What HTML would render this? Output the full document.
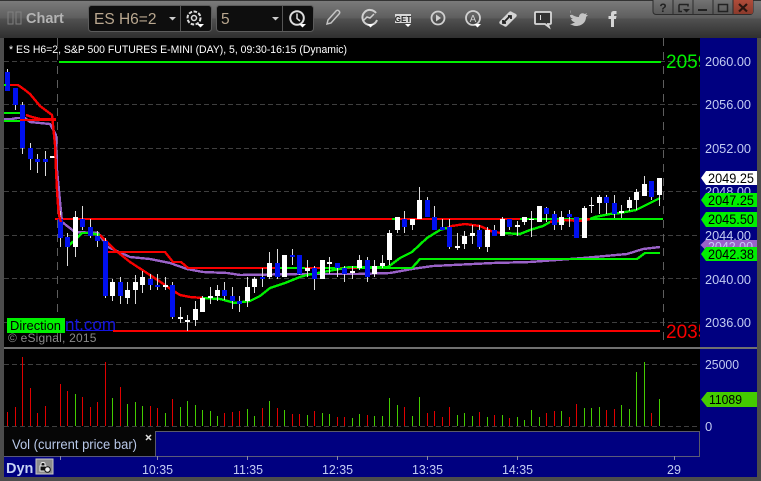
<!DOCTYPE html>
<html><head><meta charset="utf-8"><style>
html,body{margin:0;padding:0;background:#4a4a4a;width:761px;height:481px;overflow:hidden}
svg{display:block}
text{font-family:"Liberation Sans",sans-serif}
</style></head><body>
<svg width="761" height="481" viewBox="0 0 761 481" xmlns="http://www.w3.org/2000/svg">
<defs>
<linearGradient id="tb" x1="0" y1="0" x2="0" y2="1">
<stop offset="0" stop-color="#7c7c7c"/><stop offset=".47" stop-color="#5e5e5e"/><stop offset=".5" stop-color="#505050"/><stop offset="1" stop-color="#2f2f2f"/>
</linearGradient>
<linearGradient id="btn" x1="0" y1="0" x2="0" y2="1"><stop offset="0" stop-color="#7a7a7a"/><stop offset="1" stop-color="#585858"/></linearGradient>
<linearGradient id="cls" x1="0" y1="0" x2="0" y2="1"><stop offset="0" stop-color="#b8503c"/><stop offset="1" stop-color="#8a3a2c"/></linearGradient>
<clipPath id="lab"><rect x="664" y="40" width="36" height="310"/></clipPath>
<clipPath id="blu"><rect x="66" y="310" width="60" height="25"/></clipPath>
</defs>
<rect width="761" height="481" fill="#4c4c4c"/>
<rect width="761" height="38" fill="url(#tb)"/>
<rect x="0" y="0" width="761" height="1" fill="#333"/>
<rect x="4" y="38" width="696" height="393" fill="#000"/>
<rect x="700" y="38" width="57" height="439" fill="#000080"/>
<rect x="4" y="431" width="696" height="46" fill="#000080"/>
<rect x="4" y="427" width="151" height="30" fill="#060606"/>
<rect x="155" y="431" width="545" height="1" fill="#5a5a6a"/>
<rect x="155" y="431" width="1" height="26" fill="#5a5a6a"/>
<rect x="699" y="431" width="1" height="26" fill="#5a5a6a"/>
<rect x="4" y="456" width="696" height="1" fill="#5a5a7a"/>
<rect x="4" y="347" width="753" height="2" fill="#707070"/>

<!-- toolbar left -->
<rect x="8" y="12" width="5" height="12" fill="none" stroke="#808080"/>
<rect x="16" y="12" width="5" height="12" fill="none" stroke="#808080"/>
<text x="26" y="23" font-size="14.500" font-weight="bold" fill="#b4b4b4">Chart</text>
<rect x="88.500" y="5.500" width="123" height="26" rx="3" fill="#0e0e0e" stroke="#5c5c5c"/>
<rect x="180" y="6" width="1" height="25" fill="#555"/>
<text x="94" y="24" font-size="15.500" fill="#b9a78f">ES H6=2</text>
<path d="M169 17h7l-3.500 3.500z" fill="#ccc"/>
<circle cx="194" cy="18" r="6.500" fill="none" stroke="#ddd" stroke-width="2" stroke-dasharray="3.500 1.500"/>
<circle cx="194" cy="18" r="2.500" fill="none" stroke="#ddd" stroke-width="1.500"/>
<path d="M197 24h7l-3.500 3.500z" fill="#fff"/>
<rect x="216.500" y="5.500" width="97" height="26" rx="3" fill="#0e0e0e" stroke="#5c5c5c"/>
<rect x="282" y="6" width="1" height="25" fill="#555"/>
<text x="221" y="24" font-size="15.500" fill="#b9a78f">5</text>
<path d="M272 17h7l-3.500 3.500z" fill="#ccc"/>
<circle cx="297" cy="18" r="6.800" fill="none" stroke="#ddd" stroke-width="2"/>
<path d="M297 13.500V18.500L300 21" fill="none" stroke="#ddd" stroke-width="1.500"/>
<path d="M299 24h7l-3.500 3.500z" fill="#fff"/>

<!-- toolbar icons -->
<path d="M327 24l1-4 8-9c1-1 2-1 3 0s1 2 0 3l-8 9z" fill="none" stroke="#c4c4c4" stroke-width="1.500"/>
<path d="M376 13a7.500 7.500 0 1 0 1 7" fill="none" stroke="#d0d0d0" stroke-width="2"/>
<path d="M363 21l4-4 3 1 4-4" fill="none" stroke="#d0d0d0" stroke-width="1.500"/>
<path d="M367 24h7l-3.500 3.500z" fill="#fff"/>
<rect x="395" y="14" width="16" height="9" fill="#d8d8d8"/>
<text x="403" y="22" font-size="8" font-weight="bold" fill="#222" text-anchor="middle">GET</text>
<path d="M405 24h6l-3 3z" fill="#fff"/>
<circle cx="438" cy="18" r="6.500" fill="none" stroke="#d0d0d0" stroke-width="1.800"/>
<path d="M436 14.500l5 3.500-5 3.500z" fill="#d0d0d0"/>
<circle cx="473" cy="18" r="7" fill="none" stroke="#d0d0d0" stroke-width="1.800"/>
<text x="473" y="22" font-size="10" fill="#d0d0d0" text-anchor="middle">A</text>
<path d="M474 24h7l-3.500 3.500z" fill="#fff"/>
<path d="M500 21l9-9c1-1 2-1 3 0l4 2c1 1 1 2 0 3l-9 9c-1 1-2 1-3 0l-4-2c-1-1-1-2 0-3z" fill="#d4d4d4"/>
<path d="M504 22l6-6M508 16h3v3M503 20v3h3" fill="none" stroke="#222" stroke-width="1.800"/>
<path d="M536 12h14c1 0 1 1 1 1v10c0 1-1 1-1 1h-2l1 3-4-3h-9c-1 0-1-1-1-1V13c0-1 1-1 1-1z" fill="#333" stroke="#d8d8d8" stroke-width="1.800"/>
<rect x="540" y="15" width="1" height="5" fill="#ddd"/>
<path d="M571 14c3 2 5 3 8 3 0-3 3-5 6-3l2-1-1 2 2 0-2 2c0 6-5 9-10 9-2 0-4-1-6-2 2 0 4-1 5-2-2 0-3-1-4-3h2c-2-1-3-2-3-4h2c-1-1-2-3-1-5z" fill="#c4c4c4"/>
<path d="M611 27V19h-2.500v-3H611v-2c0-2 1-3 3-3h2.500v3H615c-.5 0-1 .5-1 1v1h2.500l-.5 3h-2v8z" fill="#d6d6d6"/>

<!-- window buttons -->
<rect x="653" y="-4" width="100" height="18.500" rx="3" fill="url(#btn)" stroke="#2c2c2c"/>
<rect x="733" y="-3" width="20" height="17" rx="2" fill="url(#cls)"/>
<path d="M673 0v14M693 0v14M713 0v14M733 0v14" stroke="#2c2c2c" stroke-width="1"/>
<text x="663" y="12" font-size="12" font-weight="bold" fill="#222" text-anchor="middle">?</text>
<path d="M679 4.500h9v2M679 4.500v7h3" fill="none" stroke="#222" stroke-width="1.500"/>
<path d="M683 9h7l-3.500 3.500z" fill="#222"/>
<rect x="698" y="9" width="9" height="2" fill="#222"/>
<rect x="718.500" y="4.500" width="9" height="7" fill="none" stroke="#222" stroke-width="1.500"/>
<path d="M739 4l8 7.500M747 4l-8 7.500" stroke="#2a1510" stroke-width="2.200"/>

<!-- grid -->
<g shape-rendering="crispEdges">
<path d="M4 61.500H700M4 104.500H700M4 148.500H700M4 191.500H700M4 235.500H700M4 278.500H700M4 322.500H700" stroke="#3f3f3f" stroke-dasharray="5 3" fill="none"/>
<path d="M4 364.500H700M4 426.500H700" stroke="#3f3f3f" stroke-dasharray="5 3" fill="none"/>
<path d="M57.500 38V346M663.500 38V346" stroke="#5e5e5e" stroke-dasharray="8 6" fill="none"/>

<!-- level lines -->
<rect x="59" y="61" width="602" height="2" fill="#00f000"/>
<rect x="113" y="330" width="547" height="2" fill="#f80000"/>
<rect x="55" y="218" width="608" height="2" fill="#f80000"/>
<rect x="520" y="218" width="143" height="2" fill="#00f000"/>
<rect x="392" y="218" width="6" height="2" fill="#00f000"/>

<g fill="none" stroke-width="2.400" stroke-linejoin="round">
<!-- purple -->
<path d="M4 119H12L17 118H25L30 122 50 124 56 135 57 170 62 222 75 232 98 233 108 247 130 257 150 259 170 263 187 269 203 272 227 273 240 275 300 274 357 274 390 273 412 269 433 266 493 263 530 262 583 258 627 254 643 249 660 247" stroke="#9a62c8"/>
<!-- lower line -->
<path d="M105 252H165L173 262H181L188 268H275" stroke="#f80000"/>
<path d="M275 268H365L412 268 420 259H637L645 253H660" stroke="#00f000"/>
<path d="M305 268H320M340 268H357" stroke="#f80000"/>
<path d="M4 113H20M4 121H20" stroke="#00f000"/>
<!-- ema -->
<path d="M67 247L75 240 82 233 90 233 100 235" stroke="#00f000"/>
<path d="M100 235L105 240 115 250 130 262 150 275 165 285 172 290 180 295 190 297 203 298" stroke="#f80000"/>
<path d="M203 298L220 299 235 303 250 301 260 296 270 288 285 283 300 277 307 275 350 267 388 267 400 258 412 252 427 238 440 230 447 228" stroke="#00f000"/>
<path d="M447 228L452 226 465 224 480 226 493 232 503 233" stroke="#f80000"/>
<path d="M503 233L520 234 530 230 543 226 550 222 565 221" stroke="#00f000"/>
<path d="M550 222L565 220 580 221 590 219" stroke="#f80000"/>
<path d="M590 219L595 217 610 214 620 213 636 210 648 204 660 198" stroke="#00f000"/>
</g>

<!-- wicks -->
<path stroke="#dcdcdc" fill="none" d="M7.500 69V91M15.500 88V110M22.500 102V154M30.500 143V170M37.500 154V173M45.500 151V176M60.500 211V247M67.500 233V266M82.500 206V230M90.500 219V238M97.500 231V247M105.500 238V298M120.500 277V304M150.500 274V290M157.500 274V290M172.500 282V319M224.500 282V300M232.500 287V309M239.500 296V312M262.500 268V287M277.500 249V279M292.500 249V265M299.500 255V275M314.500 266V290M337.500 263V277M344.500 266V282M367.500 257V282M404.500 211V233M427.500 197V217M434.500 206V230M442.500 219V230M449.500 219V249M479.500 225V249M494.500 225V236M509.500 219V230M546.500 207V222M554.500 211V230M569.500 210V227M576.500 217V238M606.500 195V214M614.500 195V218M651.500 181V200M75.500 211V257M112.500 279V301M127.500 282V304M135.500 275V304M142.500 271V293M165.500 277V290M180.500 307V323M187.500 315V331M195.500 301V326M202.500 296V312M210.500 287V304M217.500 285V301M247.500 277V307M254.500 277V293M269.500 252V279M284.500 255V277M307.500 260V277M322.500 260V279M329.500 257V274M352.500 266V279M359.500 255V270M374.500 260V277M382.500 255V268M389.500 230V265M397.500 217V233M412.500 219V230M419.500 187V219M457.500 233V250M464.500 231V249M472.500 225V244M487.500 227V252M502.500 217V236M517.500 221V236M524.500 217V225M531.500 211V237M539.500 206V222M561.500 211V230M584.500 206V238M591.500 197V213M599.500 195V214M621.500 205V218M629.500 197V211M636.500 189V210M644.500 176V196M659.500 178V206"/>
<!-- blue bodies -->
<path stroke="#0010ee" stroke-width="5" fill="none" d="M7.500 72V91M15.500 88V105M22.500 105V148M30.500 148V159M37.500 159V162M45.500 159V162M60.500 219V238M67.500 237V247M82.500 219V227M90.500 227V236M97.500 236V241M105.500 241V296M120.500 282V296M150.500 279V285M157.500 285V287M172.500 285V317M224.500 290V296M232.500 296V301M239.500 301V304M262.500 277V279M277.500 263V277M292.500 255V257M299.500 255V274M314.500 268V279M337.500 263V268M344.500 268V274M367.500 260V277M404.500 219V227M427.500 200V217M434.500 217V230M442.500 227V230M449.500 227V247M479.500 230V247M494.500 230V236M509.500 219V227M546.500 208V214M554.500 214V225M569.500 214V217M576.500 217V238M606.500 197V203M614.500 203V214M651.500 181V197"/>
<!-- white bodies -->
<path stroke="#fff" stroke-width="5" fill="none" d="M52.500 156V158M75.500 217V247M112.500 282V296M127.500 290V298M135.500 282V290M142.500 277V285M165.500 285V287M180.500 317V319M187.500 320V322M195.500 309V320M202.500 298V312M210.500 296V298M217.500 290V296M247.500 287V301M254.500 279V287M269.500 263V277M284.500 255V277M307.500 268V271M322.500 260V279M329.500 262V264M352.500 271V273M359.500 260V268M374.500 266V274M382.500 263V266M389.500 233V260M397.500 217V230M412.500 219V225M419.500 200V219M457.500 246V248M464.500 236V244M472.500 233V236M487.500 230V247M502.500 219V236M517.500 225V227M524.500 217V222M531.500 219V220M539.500 206V222M561.500 217V225M584.500 208V238M591.500 205V206M599.500 197V203M621.500 211V213M629.500 200V208M636.500 192V200M644.500 184V196M659.500 178V195"/>

<!-- left red over candles -->
<path d="M10 85H18L25 90 30 94 40 106 52 115 53 125 55 145 56 170 57 190 58 205 59 215 61 222" fill="none" stroke="#f80000" stroke-width="2.400"/>
<path d="M26 115L32 117 40 119H56M20 120H56" fill="none" stroke="#f80000" stroke-width="2.400"/>
<path d="M4 85H6" stroke="#00f000" stroke-width="2"/>

<!-- volume -->
<path fill="none" stroke="#e00000" d="M7.500 412V426M15.500 407V426M22.500 357V426M30.500 388V426M37.500 413V426M45.500 406V426M60.500 384V426M67.500 391V426M82.500 397V426M90.500 407V426M97.500 402V426M105.500 362V426M120.500 387V426M150.500 406V426M157.500 408V426M172.500 399V426M224.500 413V426M232.500 412V426M239.500 411V426M262.500 408V426M277.500 408V426M292.500 414V426M299.500 414V426M314.500 411V426M337.500 417V426M344.500 417V426M367.500 415V426M404.500 407V426M427.500 413V426M434.500 411V426M442.500 417V426M449.500 407V426M479.500 412V426M494.500 415V426M509.500 418V426M546.500 413V426M554.500 411V426M569.500 417V426M576.500 404V426M606.500 410V426M614.500 409V426M651.500 413V426"/>
<path fill="none" stroke="#44cc00" d="M75.500 394V426M112.500 398V426M127.500 404V426M135.500 402V426M142.500 406V426M165.500 413V426M180.500 407V426M187.500 401V426M195.500 405V426M202.500 410V426M210.500 411V426M217.500 416V426M247.500 409V426M254.500 416V426M269.500 401V426M284.500 410V426M307.500 415V426M322.500 413V426M329.500 414V426M352.500 418V426M359.500 414V426M374.500 416V426M382.500 416V426M389.500 398V426M397.500 405V426M412.500 416V426M419.500 397V426M457.500 415V426M464.500 413V426M472.500 416V426M487.500 417V426M502.500 415V426M517.500 417V426M524.500 420V426M531.500 410V426M539.500 417V426M561.500 411V426M584.500 408V426M591.500 408V426M599.500 407V426M621.500 405V426M629.500 409V426M636.500 372V426M644.500 362V426M659.500 399V426"/>

<!-- ticks -->
<path d="M60.500 456V460M157.500 456V460M247.500 456V460M337.500 456V460M427.500 456V460M517.500 456V460M674.500 456V460" stroke="#8888a8" fill="none"/>
</g>

<!-- chart text -->
<text x="9" y="53" font-size="11" fill="#fff" textLength="338" lengthAdjust="spacingAndGlyphs">* ES H6=2, S&amp;P 500 FUTURES E-MINI (DAY), 5, 09:30-16:15 (Dynamic)</text>
<g clip-path="url(#lab)" font-size="19">
<text x="666" y="68" fill="#00f000">2059</text>
<text x="666" y="338" fill="#f80000">2035</text>
</g>
<g clip-path="url(#blu)">
<text x="65" y="330" font-size="17" fill="#1414e0">nt.com</text>
</g>
<rect x="66" y="330" width="47" height="1" fill="#1414e0"/>
<rect x="7" y="318" width="58" height="15" fill="#00f000"/>
<text x="10" y="330" font-size="13" fill="#000" textLength="51" lengthAdjust="spacingAndGlyphs">Direction</text>
<text x="8" y="342" font-size="12" fill="#8a8a8a" letter-spacing=".2">© eSignal, 2015</text>

<!-- axis labels -->
<g font-size="13" fill="#c2cbf2">
<text x="705" y="66" textLength="46" lengthAdjust="spacingAndGlyphs">2060.00</text>
<text x="705" y="109" textLength="46" lengthAdjust="spacingAndGlyphs">2056.00</text>
<text x="705" y="153" textLength="46" lengthAdjust="spacingAndGlyphs">2052.00</text>
<text x="705" y="196" textLength="46" lengthAdjust="spacingAndGlyphs">2048.00</text>
<text x="705" y="240" textLength="46" lengthAdjust="spacingAndGlyphs">2044.00</text>
<text x="705" y="327" textLength="46" lengthAdjust="spacingAndGlyphs">2036.00</text>
<text x="705" y="284" textLength="46" lengthAdjust="spacingAndGlyphs">2040.00</text>
<text x="705" y="369" textLength="34" lengthAdjust="spacingAndGlyphs">25000</text>
<text x="705" y="431">0</text>
</g>
<!-- tags -->
<path d="M700.500 245l5-5H757v10H705.500z" fill="#9a62c8"/>
<text x="708" y="251" font-size="13" fill="#c2cbf2" textLength="45" lengthAdjust="spacingAndGlyphs">2042.00</text>
<path d="M701 178l5-7h51v14H706z" fill="#fff"/>
<text x="708" y="183" font-size="13.500" fill="#000" textLength="46" lengthAdjust="spacingAndGlyphs">2049.25</text>
<path d="M701 200l5-7h51v14H706z" fill="#00f000"/>
<text x="708" y="205" font-size="13.500" fill="#000" textLength="46" lengthAdjust="spacingAndGlyphs">2047.25</text>
<path d="M701 219.500l5-7.500h51v15H706z" fill="#00f000"/>
<text x="708" y="224" font-size="13.500" fill="#000" textLength="46" lengthAdjust="spacingAndGlyphs">2045.50</text>
<path d="M701 254l5-7h51v14H706z" fill="#00f000"/>
<text x="708" y="259" font-size="13.500" fill="#000" textLength="46" lengthAdjust="spacingAndGlyphs">2042.38</text>
<path d="M701 399.500l6-7.500h50v15H707z" fill="#44cc00"/>
<text x="709" y="404" font-size="13" fill="#000" textLength="33" lengthAdjust="spacingAndGlyphs">11089</text>

<!-- vol label -->
<text x="12" y="449" font-size="13.500" fill="#b8c8e8" textLength="125" lengthAdjust="spacingAndGlyphs">Vol (current price bar)</text>
<path d="M146 435l5 5M151 435l-5 5" stroke="#ddd" stroke-width="1.500"/>

<!-- bottom axis -->
<text x="6" y="473" font-size="14.500" font-weight="bold" fill="#c8d4f4">Dyn</text>
<rect x="36" y="459" width="17" height="15" fill="#8c8c8c" stroke="#c8c8c8"/>
<path d="M40 471v-5h6v5zM41 466v-2c0-2 4-2 4 0v2" fill="#111" stroke="#eee"/>
<circle cx="47.500" cy="469.500" r="2.800" fill="#eee" stroke="#111"/>
<g font-size="13" fill="#c2cbf2">
<text x="142" y="474" textLength="31" lengthAdjust="spacingAndGlyphs">10:35</text>
<text x="233" y="474" textLength="30" lengthAdjust="spacingAndGlyphs">11:35</text>
<text x="322" y="474" textLength="31" lengthAdjust="spacingAndGlyphs">12:35</text>
<text x="412" y="474" textLength="31" lengthAdjust="spacingAndGlyphs">13:35</text>
<text x="502" y="474" textLength="31" lengthAdjust="spacingAndGlyphs">14:35</text>
<text x="667" y="474" textLength="14" lengthAdjust="spacingAndGlyphs">29</text>
</g>
</svg>
</body></html>
